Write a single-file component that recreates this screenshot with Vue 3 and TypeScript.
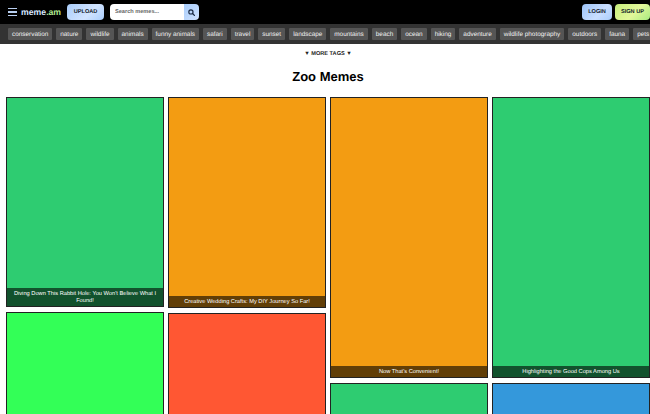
<template>
  <div class="page">
    <header class="topbar">
      <button class="menu" aria-label="Menu">
        <span></span><span></span><span></span>
      </button>
      <div class="logo">meme<em>.am</em></div>
      <button class="btn upload">UPLOAD</button>
      <div class="search">
        <input type="text" placeholder="Search memes..." />
        <button aria-label="Search">
          <svg width="7" height="7" viewBox="0 0 12 12">
            <circle cx="5" cy="5" r="3.6" fill="none" stroke="#1a2a44" stroke-width="2" />
            <path d="M7.8 7.8 11 11" stroke="#1a2a44" stroke-width="2.2" stroke-linecap="round" />
          </svg>
        </button>
      </div>
      <div class="spacer"></div>
      <button class="btn login">LOGIN</button>
      <button class="btn signup">SIGN UP</button>
    </header>

    <nav class="tags">
      <a v-for="tag in tags" :key="tag" class="tag">{{ tag }}</a>
    </nav>

    <div class="content">
      <div class="more">▼ MORE TAGS ▼</div>
      <h1>Zoo Memes</h1>

      <main class="columns">
        <div v-for="(col, i) in columns" :key="i" class="column">
          <div
            v-for="card in col"
            :key="card.color + card.height"
            class="card"
            :style="{ background: card.color, height: card.height + 'px' }"
          >
            <div v-if="card.title" class="caption">{{ card.title }}</div>
          </div>
        </div>
      </main>
    </div>
  </div>
</template>

<script setup lang="ts">
interface Card {
  color: string;
  height: number;
  title?: string;
}

const tags: string[] = [
  'conservation', 'nature', 'wildlife', 'animals', 'funny animals', 'safari', 'travel',
  'sunset', 'landscape', 'mountains', 'beach', 'ocean', 'hiking', 'adventure',
  'wildlife photography', 'outdoors', 'fauna', 'pets',
];

const columns: Card[][] = [
  [
    { color: '#2ecc71', height: 210, title: "Diving Down This Rabbit Hole: You Won't Believe What I Found!" },
    { color: '#33ff57', height: 200 },
  ],
  [
    { color: '#f39c12', height: 211, title: 'Creative Wedding Crafts: My DIY Journey So Far!' },
    { color: '#ff5733', height: 200 },
  ],
  [
    { color: '#f39c12', height: 281, title: "Now That's Convenient!" },
    { color: '#2ecc71', height: 200 },
  ],
  [
    { color: '#2ecc71', height: 281, title: 'Highlighting the Good Cops Among Us' },
    { color: '#3498db', height: 200 },
  ],
];
</script>

<style>
html, body {
  margin: 0;
  height: 414px;
  overflow: hidden;
  background: #fff;
}
</style>

<style scoped>
.page {
  width: 650px;
  height: 414px;
  font-family: "Liberation Sans", Arial, sans-serif;
  text-rendering: geometricPrecision;
  overflow: hidden;
}

.topbar {
  display: flex;
  align-items: center;
  height: 24px;
  background: #000;
  padding: 0 0 0 8px;
  box-sizing: border-box;
}

.menu {
  display: flex;
  flex-direction: column;
  justify-content: space-between;
  width: 9px;
  height: 8px;
  padding: 0;
  border: none;
  background: none;
  margin-right: 4px;
}

.menu span {
  height: 1.4px;
  background: #b9cff0;
}

.logo {
  font-size: 8.7px;
  font-weight: 700;
  color: #d6e6ff;
  width: 46px;
}

.logo em {
  font-style: normal;
  color: #b0e88f;
}

.btn {
  height: 16px;
  padding: 0;
  border: none;
  border-radius: 4px;
  font-family: inherit;
  font-size: 5.6px;
  font-weight: 700;
  color: #101828;
  text-rendering: inherit;
}

.upload {
  width: 37px;
  background: linear-gradient(135deg, #a9cdfb, #d2e4ff 60%, #a9cdfb);
}

.search {
  display: flex;
  height: 16px;
  margin-left: 6px;
  border-radius: 4px;
  overflow: hidden;
}

.search input {
  width: 74px;
  border: none;
  outline: none;
  padding: 0 0 0 5px;
  box-sizing: border-box;
  background: #fff;
  font-family: inherit;
  font-size: 5.6px;
  font-weight: 700;
  text-rendering: inherit;
}

.search input::placeholder {
  color: #666;
}

.search button {
  display: flex;
  align-items: center;
  justify-content: center;
  width: 15px;
  padding: 0;
  border: none;
  background: linear-gradient(135deg, #a9cdfb, #cfe2ff);
}

.spacer {
  flex: 1;
}

.login {
  width: 30px;
  background: linear-gradient(135deg, #9cc3f8, #c9deff 60%, #a9cdfb);
}

.signup {
  width: 35px;
  margin-left: 3px;
  background: linear-gradient(135deg, #c6ee7c, #e2f79a 55%, #a8ec80);
}

.tags {
  display: flex;
  gap: 4px;
  align-items: center;
  height: 20px;
  padding-left: 8px;
  background: #333;
  overflow: hidden;
  white-space: nowrap;
}

.tag {
  flex: none;
  padding: 3px 4px 1px;
  border-radius: 1px;
  background: #555;
  color: #f2f2f2;
  font-size: 6.4px;
  line-height: 8px;
}

.content {
  padding-left: 6px;
}

.more {
  margin-top: 6px;
  text-align: center;
  font-size: 5.6px;
  font-weight: 700;
  line-height: 9px;
  color: #222;
}

h1 {
  margin: 9px 0 0;
  text-align: center;
  font-size: 13px;
  line-height: 17px;
  font-weight: 700;
  color: #000;
}

.columns {
  display: flex;
  gap: 4px;
  margin-top: 12px;
}

.column {
  display: flex;
  flex-direction: column;
  gap: 5px;
  width: 158px;
  flex: none;
}

.card {
  position: relative;
  flex: none;
  box-sizing: border-box;
  border: 1px solid #222;
}

.caption {
  position: absolute;
  left: 0;
  right: 0;
  bottom: 0;
  padding: 3px 4px 1px;
  background: rgba(0, 0, 0, 0.6);
  color: #fff;
  text-align: center;
  font-size: 5.7px;
  line-height: 7px;
}
</style>
